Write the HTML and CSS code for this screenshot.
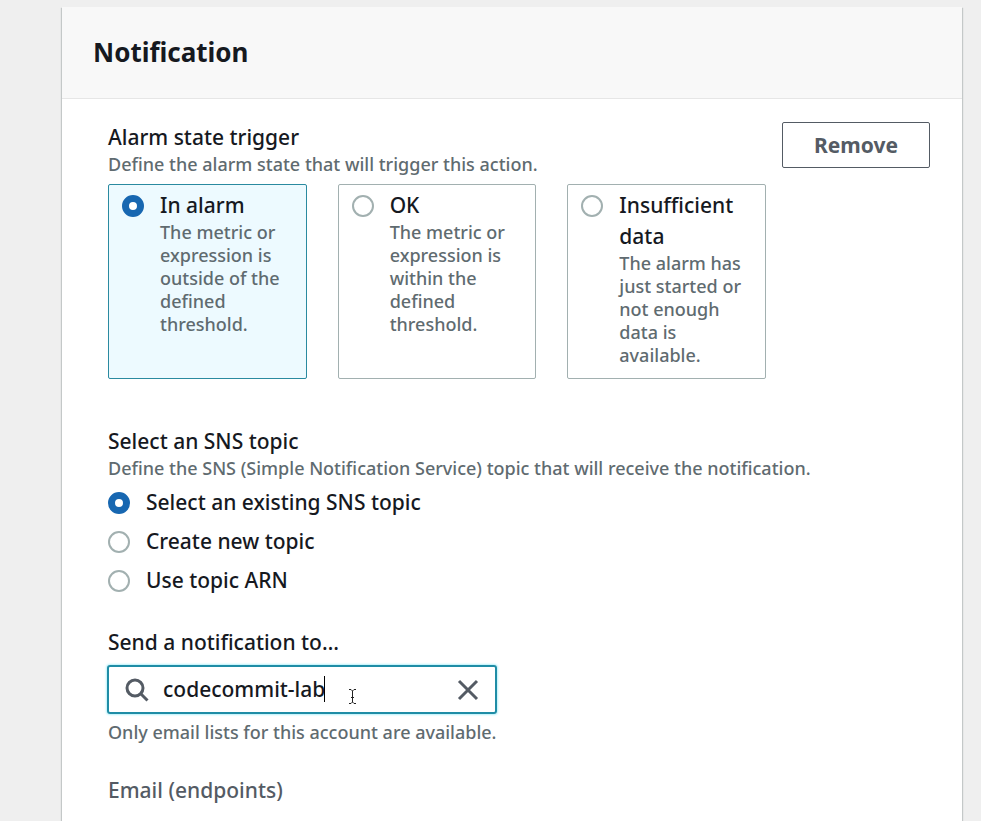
FILE: index.html
```html
<!DOCTYPE html>
<html lang="en">
<head>
<meta charset="utf-8">
<title>Notification</title>
<link rel="stylesheet" href="styles.css">
</head>
<body>
<main class="panel">
  <header class="panel-header"><h2>Notification</h2></header>
  <form class="panel-body">
    <div class="trigger-row">
      <fieldset class="field">
        <legend class="label">Alarm state trigger</legend>
        <p class="hint">Define the alarm state that will trigger this action.</p>
        <div class="tiles">
          <label class="tile">
            <input class="radio" type="radio" name="state" checked>
            <span class="tile-text"><span class="label">In alarm</span><span class="hint">The metric or expression is outside of the defined threshold.</span></span>
          </label>
          <label class="tile">
            <input class="radio" type="radio" name="state">
            <span class="tile-text"><span class="label">OK</span><span class="hint">The metric or expression is within the defined threshold.</span></span>
          </label>
          <label class="tile">
            <input class="radio" type="radio" name="state">
            <span class="tile-text"><span class="label">Insufficient data</span><span class="hint">The alarm has just started or not enough data is available.</span></span>
          </label>
        </div>
      </fieldset>
      <button class="remove" type="button">Remove</button>
    </div>

    <fieldset class="field topic">
      <legend class="label">Select an SNS topic</legend>
      <p class="hint">Define the SNS (Simple Notification Service) topic that will receive the notification.</p>
      <div class="options">
        <label class="option"><input class="radio" type="radio" name="topic" checked><span class="label">Select an existing SNS topic</span></label>
        <label class="option"><input class="radio" type="radio" name="topic"><span class="label">Create new topic</span></label>
        <label class="option"><input class="radio" type="radio" name="topic"><span class="label">Use topic ARN</span></label>
      </div>
    </fieldset>

    <div class="field send">
      <label class="label" for="send-to">Send a notification to…</label>
      <div class="search">
        <svg class="search-icon" viewBox="0 0 24 24" aria-hidden="true"><circle cx="10" cy="10" r="8"/><path d="M15.800 15.800L22.500 22.500"/></svg>
        <div class="search-entry">
          <input id="send-to" type="text" value="codecommit-lab">
          <span class="caret"></span>
          <svg class="pointer" viewBox="0 0 9 17" aria-hidden="true"><path d="M1 1.500H3L4.500 3L6 1.500H8M4.500 3V14M1 15.500H3L4.500 14L6 15.500H8M3 9.500H6"/></svg>
        </div>
        <button class="clear" type="button" aria-label="Clear"><svg viewBox="0 0 22 22" aria-hidden="true"><path d="M2 2L20 20M20 2L2 20"/></svg></button>
      </div>
      <p class="hint">Only email lists for this account are available.</p>
    </div>

    <div class="field email">
      <p class="label muted">Email (endpoints)</p>
    </div>
  </form>
</main>
</body>
</html>
```

FILE: styles.css
```css
* { box-sizing: border-box; }
body {
  margin: 0;
  padding: 7px 19px 0 62px;
  background: #efefef;
  color: #16191f;
  font-family: "Noto Sans", sans-serif;
  font-size: 21px;
  font-weight: 500;
  line-height: 31px;
}
h2, p { margin: 0; }
.panel {
  min-height: calc(100vh - 7px);
  background: #fff;
  box-shadow: 0 1px 1px 0 #c4c8c8, 1px 1px 1px 0 #c4c8c8, -1px 1px 1px 0 #c4c8c8;
}
.panel-header {
  padding: 30px 31px;
  background: #f8f8f8;
  border-bottom: 1px solid #e6e6e6;
}
h2 { font-size: 26px; line-height: 31px; font-weight: 700; }
.panel-body { padding: 23px 32px 0 46px; }
.trigger-row { display: grid; grid-template-columns: 1fr auto; gap: 16px; align-items: start; }
.field { min-width: 0; margin: 0; padding: 0; border: 0; }
.label { display: block; padding: 0; font-size: 21px; line-height: 31px; }
.hint { display: block; color: #5f6b70; font-size: 18px; line-height: 23px; }
.muted { color: #545b64; }
.tiles { display: grid; grid-template-columns: repeat(3, 1fr); gap: 31px; margin-top: 8px; }
.tile {
  display: flex;
  gap: 16px;
  padding: 5px 16px 11px 13px;
  border: 1px solid #a2b0b0;
  border-radius: 2px;
}
.tile:has(:checked) { background: #edfaff; border-color: #2a8aa0; }
.tile-text { min-width: 0; }
.radio {
  appearance: none;
  flex: none;
  width: 22px;
  height: 22px;
  margin: 5px 0 0;
  border: 2px solid #a2b0b0;
  border-radius: 50%;
  background: #fff;
}
.radio:checked { border: 7px solid #1767b1; }
.remove {
  width: 148px;
  height: 46px;
  padding: 0;
  border: 1px solid #545b64;
  border-radius: 2px;
  background: #fff;
  color: #545b64;
  font: 700 21px/31px "Noto Sans", sans-serif;
}
.topic { margin-top: 47px; }
.options { display: grid; gap: 8px; margin-top: 7px; }
.option { display: flex; gap: 16px; }
.send { margin-top: 31px; }
.search {
  display: flex;
  align-items: center;
  max-width: 390px;
  height: 49px;
  margin: 7px 0 7px -1px;
  padding: 0 16px;
  border: 2px solid #1f8da6;
  border-radius: 3px;
  box-shadow: 0 0 2px 1px #b8f2fb;
}
.search-icon { flex: none; width: 24px; height: 24px; fill: none; stroke: #545b64; stroke-width: 3; }
.search-entry { position: relative; flex: 1; min-width: 0; margin-left: 14px; }
.search-entry input {
  display: block;
  width: 100%;
  padding: 0;
  border: 0;
  outline: 0;
  background: none;
  color: #16191f;
  font: 500 21px/31px "Noto Sans", sans-serif;
}
.caret { position: absolute; left: 161px; top: 2px; width: 1px; height: 26px; background: #000; }
.pointer { position: absolute; left: 185px; top: 14px; width: 9px; height: 17px; fill: none; stroke: #222; stroke-width: 1; }
.clear { width: 22px; height: 22px; padding: 0; border: 0; background: none; }
.clear svg { display: block; width: 22px; height: 22px; fill: none; stroke: #545b64; stroke-width: 3; }
.email { margin-top: 31px; }
```
